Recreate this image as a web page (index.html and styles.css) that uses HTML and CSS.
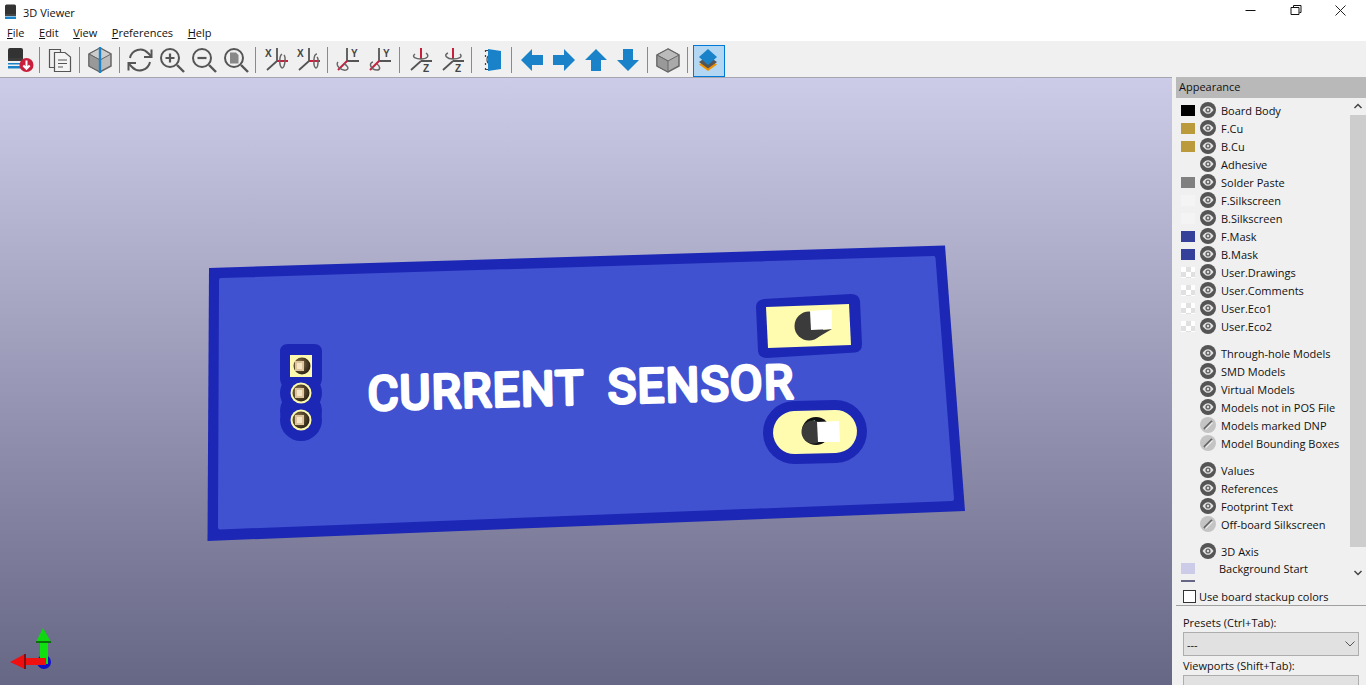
FILE: index.html
```html
<!DOCTYPE html>
<html lang="en">
<head>
<meta charset="utf-8">
<title>3D Viewer</title>
<link rel="stylesheet" href="styles.css">
</head>
<body>
<svg class="defs" width="0" height="0" aria-hidden="true">
  <symbol id="eye" viewBox="0 0 16 16">
    <circle cx="8" cy="8" r="8" fill="#555"/>
    <path d="M2.5 8C4.5 5 6.2 4.2 8 4.2S11.5 5 13.5 8C11.5 11 9.800 11.800 8 11.800S4.500 11 2.500 8Z" fill="#e4e4e4"/>
    <circle cx="8" cy="8" r="2.600" fill="#666"/>
    <circle cx="8" cy="8" r="1.200" fill="#ddd"/>
  </symbol>
  <symbol id="eye-off" viewBox="0 0 16 16">
    <circle cx="8" cy="8" r="8" fill="#c4c4c4"/>
    <path d="M4 12L12 4" stroke="#666" stroke-width="2"/>
    <path d="M5.500 12.500L12.500 5.500" stroke="#eee" stroke-width="1.200"/>
  </symbol>
  <symbol id="page-glass" viewBox="0 0 32 32">
    <circle cx="14" cy="14" r="9" fill="none" stroke="#555" stroke-width="2"/>
    <path d="M21 21L28 28" stroke="#555" stroke-width="2.400"/>
  </symbol>
</svg>

<header class="titlebar">
  <svg class="app-icon" width="16" height="16" viewBox="0 0 16 16">
    <path d="M2 2a1.500 1.500 0 0 1 1.500-1.500h8A1.500 1.500 0 0 1 13 2v8H2Z" fill="#333"/>
    <rect x="2" y="10" width="11" height="2" fill="#444"/>
    <rect x="2" y="12.500" width="11" height="2.500" fill="#1a82c8"/>
  </svg>
  <span class="title-text">3D Viewer</span>
  <div class="window-buttons">
    <svg class="win-btn" width="45" height="24" viewBox="0.500 0 45 24"><path d="M18 10.500H28" stroke="#111"/></svg>
    <svg class="win-btn" width="45" height="24" viewBox="0.500 0 45 24"><path d="M18.500 7.500H26.500V14.500H18.500Z M21 7V5.500H28.500V12.500H27" fill="none" stroke="#111"/></svg>
    <svg class="win-btn" width="45" height="24" viewBox="0.500 0 45 24"><path d="M18 5.500L28 15.500M28 5.500L18 15.500" stroke="#222"/></svg>
  </div>
</header>

<nav class="menubar">
  <span class="menu-item"><u>F</u>ile</span>
  <span class="menu-item"><u>E</u>dit</span>
  <span class="menu-item"><u>V</u>iew</span>
  <span class="menu-item"><u>P</u>references</span>
  <span class="menu-item"><u>H</u>elp</span>
</nav>

<div class="toolbar">
  <button class="tool"><svg width="32" height="32" viewBox="0 0 32 32">
    <path d="M4 6a2 2 0 0 1 2-2h11a2 2 0 0 1 2 2v8H4Z" fill="#333"/><rect x="4" y="14" width="15" height="3" fill="#3b3b3b"/>
    <rect x="4" y="19" width="15" height="1.500" fill="#1a82c8"/><rect x="4" y="22" width="15" height="2.500" fill="#1a82c8"/>
    <circle cx="22.500" cy="21" r="7" fill="#c8203c"/><path d="M22.500 16.500V24M19.300 21.500L22.500 24.800L25.700 21.500" fill="none" stroke="#fff" stroke-width="2"/>
  </svg></button>
  <span class="sep"></span>
  <button class="tool"><svg width="32" height="32" viewBox="0 0 32 32">
    <path d="M16.500 8.500V5.500H5.500V23.500H10.500" fill="none" stroke="#555" stroke-width="1.200"/>
    <path d="M10.500 8.500H21L26.500 13V27.500H10.500Z" fill="#f4f4f4" stroke="#555" stroke-width="1.200"/>
    <path d="M14 16H23M14 19.500H23M14 23H19" stroke="#555" stroke-width="1.200"/>
  </svg></button>
  <span class="sep"></span>
  <button class="tool"><svg width="32" height="32" viewBox="0 0 32 32">
    <path d="M16 4L27 10V22L16 28L5 22V10Z" fill="#bbb" stroke="#666" stroke-width="1.500"/>
    <path d="M5 10L16 16L27 10L16 4Z" fill="#ccc" stroke="#666"/><path d="M5 10L16 16V28L5 22Z" fill="#999" stroke="#666"/>
    <path d="M16 3V29" stroke="#1a82c8" stroke-width="2.400"/>
  </svg></button>
  <span class="sep"></span>
  <button class="tool"><svg width="32" height="32" viewBox="0 0 32 32">
    <path d="M6 14A10.500 10.500 0 0 1 24 9L27 12" fill="none" stroke="#555" stroke-width="2"/><path d="M27.500 5.500V13H20" fill="none" stroke="#555" stroke-width="2"/>
    <path d="M26 18A10.500 10.500 0 0 1 8 23L5 20" fill="none" stroke="#555" stroke-width="2"/><path d="M4.500 26.500V19H12" fill="none" stroke="#555" stroke-width="2"/>
  </svg></button>
  <button class="tool"><svg width="32" height="32" viewBox="0 0 32 32">
    <use href="#page-glass"/><path d="M14 9.500V18.500M9.500 14H18.500" stroke="#555" stroke-width="2.200"/>
  </svg></button>
  <button class="tool"><svg width="32" height="32" viewBox="0 0 32 32">
    <use href="#page-glass"/><path d="M9.500 14H18.500" stroke="#555" stroke-width="2.200"/>
  </svg></button>
  <button class="tool"><svg width="32" height="32" viewBox="0 0 32 32">
    <use href="#page-glass"/><path d="M10 8.500H16L18.500 11V19.500H10Z" fill="#888"/>
  </svg></button>
  <span class="sep"></span>
  <button class="tool"><svg width="32" height="32" viewBox="0 0 32 32">
    <text class="axis-letter" x="5" y="13">X</text>
    <path d="M17 4V17M17 17L7 26" stroke="#555" stroke-width="1.800" fill="none"/><path d="M17 17H28" stroke="#c8203c" stroke-width="2"/>
    <path d="M22 10C19 12 19 22 22 24C25 24 26 13 24 11" fill="none" stroke="#666" stroke-width="1.500"/>
  </svg></button>
  <button class="tool"><svg width="32" height="32" viewBox="0 0 32 32">
    <text class="axis-letter" x="5" y="13">X</text>
    <path d="M17 4V17M17 17L7 26" stroke="#555" stroke-width="1.800" fill="none"/><path d="M17 17H28" stroke="#c8203c" stroke-width="2"/>
    <path d="M25 10C21 10 21 23 24 24C26 24 27 15 25 13" fill="none" stroke="#666" stroke-width="1.500"/>
  </svg></button>
  <span class="sep"></span>
  <button class="tool"><svg width="32" height="32" viewBox="0 0 32 32">
    <text class="axis-letter" x="19" y="13">Y</text>
    <path d="M15 4V17H27" stroke="#555" stroke-width="1.800" fill="none"/><path d="M15 17L6 26" stroke="#c8203c" stroke-width="2"/>
    <path d="M6 18C3 21 9 27 14 26C18 25 15 21 12 20" fill="none" stroke="#666" stroke-width="1.500"/>
  </svg></button>
  <button class="tool"><svg width="32" height="32" viewBox="0 0 32 32">
    <text class="axis-letter" x="19" y="13">Y</text>
    <path d="M15 4V17H27" stroke="#555" stroke-width="1.800" fill="none"/><path d="M15 17L6 26" stroke="#c8203c" stroke-width="2"/>
    <path d="M9 18C4 19 7 26 13 26C17 26 16 22 13 20" fill="none" stroke="#666" stroke-width="1.500"/>
  </svg></button>
  <span class="sep"></span>
  <button class="tool"><svg width="32" height="32" viewBox="0 0 32 32">
    <text class="axis-letter" x="19" y="28">Z</text>
    <path d="M17 4V15" stroke="#c8203c" stroke-width="2"/><path d="M17 17H28M17 17L7 26" stroke="#555" stroke-width="1.800"/>
    <path d="M11 10C7 13 12 15 17 15C23 15 26 12 22 9" fill="none" stroke="#666" stroke-width="1.500"/>
  </svg></button>
  <button class="tool"><svg width="32" height="32" viewBox="0 0 32 32">
    <text class="axis-letter" x="19" y="28">Z</text>
    <path d="M17 4V15" stroke="#c8203c" stroke-width="2"/><path d="M17 17H28M17 17L7 26" stroke="#555" stroke-width="1.800"/>
    <path d="M12 9C7 11 11 15 17 15C23 15 27 13 24 10" fill="none" stroke="#666" stroke-width="1.500"/>
  </svg></button>
  <span class="sep"></span>
  <button class="tool"><svg width="32" height="32" viewBox="0 0 32 32">
    <path d="M13 6.500H9.500V8M9.500 11V13M9.500 19V21M9.500 24V25.500H13" fill="none" stroke="#444" stroke-width="1.200"/>
    <path d="M14 11C10 12 10 19 14 20" fill="none" stroke="#444" stroke-width="1.200"/>
    <path d="M12 5L25 7V25L12 27Z" fill="#1a82c8"/>
  </svg></button>
  <span class="sep"></span>
  <button class="tool"><svg width="32" height="32" viewBox="0 0 32 32"><path d="M5 16L16 5V11H27V21H16V27Z" fill="#1a82c8"/></svg></button>
  <button class="tool"><svg width="32" height="32" viewBox="0 0 32 32"><path d="M27 16L16 5V11H5V21H16V27Z" fill="#1a82c8"/></svg></button>
  <button class="tool"><svg width="32" height="32" viewBox="0 0 32 32"><path d="M16 5L27 16H21V27H11V16H5Z" fill="#1a82c8"/></svg></button>
  <button class="tool"><svg width="32" height="32" viewBox="0 0 32 32"><path d="M16 27L27 16H21V5H11V16H5Z" fill="#1a82c8"/></svg></button>
  <span class="sep"></span>
  <button class="tool"><svg width="32" height="32" viewBox="0 0 32 32">
    <path d="M16 5L27 11V22L16 28L5 22V11Z" fill="#aaa" stroke="#666" stroke-width="1.500"/>
    <path d="M5 11L16 17L27 11L16 5Z" fill="#bbb" stroke="#666"/><path d="M5 11L16 17V28L5 22Z" fill="#999" stroke="#666"/>
  </svg></button>
  <span class="sep"></span>
  <button class="tool tool-active"><svg width="32" height="32" viewBox="0 0 32 32">
    <path d="M16 15L25 20.500L16 27L7 20.500Z" fill="#f29100"/>
    <path d="M16 12L25 18L16 24.500L7 18Z" fill="#555"/>
    <path d="M16 5L25 13L16 21L7 13Z" fill="#1a82c8"/>
  </svg></button>
</div>

<main class="workspace">
  <svg class="viewport" viewBox="0 78 1172 607" preserveAspectRatio="none">
    <defs>
      <linearGradient id="bg" x1="0" y1="0" x2="0" y2="1">
        <stop offset="0" stop-color="#ccccE8"/>
        <stop offset="1" stop-color="#666685"/>
      </linearGradient>
      <radialGradient id="pin" cx="0.350" cy="0.400" r="0.700">
        <stop offset="0" stop-color="#a08458"/>
        <stop offset="0.600" stop-color="#4e4028"/>
        <stop offset="1" stop-color="#241d12"/>
      </radialGradient>
    </defs>
    <rect x="0" y="78" width="1172" height="607" fill="url(#bg)"/>

    <path d="M209 268L945 245.500L965 511L207.500 541Z" fill="#1c27b5"/>
    <path d="M221 280L933.500 258L952 499L220 527.500Z" fill="#4052d0" stroke="#4052d0" stroke-width="4" stroke-linejoin="round"/>

    <text class="board-text" transform="matrix(1 -0.028 0.02 1 368 410)">CURRENT SENSOR</text>

    <g class="connector">
      <path d="M288 344H314Q322 344 322 352V378Q322 383 319 386Q323 393 319 400Q330 420 301 441Q272 420 283 400Q279 393 283 386Q280 383 280 378V352Q280 344 288 344Z" fill="#1c27b5"/>
      <circle cx="301" cy="393" r="21" fill="#1c27b5"/>
      <circle cx="301" cy="420" r="21" fill="#1c27b5"/>
      <rect x="290" y="355" width="22" height="22" fill="#fdfab0"/>
      <circle cx="302" cy="366" r="8.500" fill="url(#pin)"/>
      <rect x="295" y="361" width="9" height="10" fill="#dcc49c"/>
      <rect x="297" y="363" width="5" height="6" fill="#f6e6c8"/>
      <circle cx="301" cy="393" r="10.500" fill="#fdfab0"/>
      <circle cx="301" cy="393" r="8.500" fill="url(#pin)"/>
      <rect x="295" y="388" width="9" height="10" fill="#dcc49c"/>
      <rect x="297" y="390" width="5" height="6" fill="#f6e6c8"/>
      <circle cx="301" cy="420" r="10.500" fill="#fdfab0"/>
      <circle cx="301" cy="420" r="8.500" fill="url(#pin)"/>
      <rect x="295" y="415" width="9" height="10" fill="#dcc49c"/>
      <rect x="297" y="417" width="5" height="6" fill="#f6e6c8"/>
    </g>

    <path d="M764 299L851 294Q859 294 860 301L862 344Q862 352 855 352.500L767 358Q759 358 758 351L756 307Q756 300 764 299Z" fill="#1c27b5"/>
    <path d="M766 307L849 304L851 345L768 348Z" fill="#fffcb0"/>
    <circle cx="809" cy="326" r="14.500" fill="#3b3b3b"/>
    <path d="M810 331L832 329L815 339Z" fill="#3b3b3b"/>
    <path d="M810 311L832 309.500L832 329L811 330Z" fill="#ffffff"/>

    <rect x="763" y="400.500" width="104" height="63" rx="31.500" transform="rotate(-1.600 815 432)" fill="#1c27b5"/>
    <rect x="773" y="410.500" width="84" height="43" rx="21.500" transform="rotate(-1.600 815 432)" fill="#fffcb0"/>
    <circle cx="816" cy="431" r="14" fill="#111"/>
    <path d="M808 423L815 420L815 424L809 425Z" fill="#8fe0c0"/>
    <circle cx="813" cy="432" r="11.500" fill="#3b3b3b"/>
    <path d="M817 422L839 421L840 442L818 442Z" fill="#ffffff"/>

    <circle cx="44" cy="662" r="7" fill="#1010c4"/>
    <rect x="40" y="642" width="8" height="22" fill="#10e010"/>
    <path d="M43 628L51 642H36Z" fill="#10d810"/>
    <rect x="36" y="641" width="15" height="2" fill="#0a700a"/>
    <rect x="25" y="658" width="21" height="7" fill="#f01010"/>
    <path d="M10 662L25 654V669Z" fill="#ee1010"/>
    <rect x="24" y="654" width="2" height="15" fill="#801010"/>
  </svg>

  <aside class="side">
    <div class="panel">
      <div class="panel-title">Appearance</div>
      <div class="layers">
        <div class="layer-list">
          <div class="group">
            <div class="row"><i class="sw sw-black"></i><svg class="eye"><use href="#eye"/></svg><span>Board Body</span></div>
            <div class="row"><i class="sw sw-cu"></i><svg class="eye"><use href="#eye"/></svg><span>F.Cu</span></div>
            <div class="row"><i class="sw sw-cu"></i><svg class="eye"><use href="#eye"/></svg><span>B.Cu</span></div>
            <div class="row"><i class="sw"></i><svg class="eye"><use href="#eye"/></svg><span>Adhesive</span></div>
            <div class="row"><i class="sw sw-paste"></i><svg class="eye"><use href="#eye"/></svg><span>Solder Paste</span></div>
            <div class="row"><i class="sw sw-silk"></i><svg class="eye"><use href="#eye"/></svg><span>F.Silkscreen</span></div>
            <div class="row"><i class="sw sw-silk"></i><svg class="eye"><use href="#eye"/></svg><span>B.Silkscreen</span></div>
            <div class="row"><i class="sw sw-mask"></i><svg class="eye"><use href="#eye"/></svg><span>F.Mask</span></div>
            <div class="row"><i class="sw sw-mask"></i><svg class="eye"><use href="#eye"/></svg><span>B.Mask</span></div>
            <div class="row"><i class="sw sw-check"></i><svg class="eye"><use href="#eye"/></svg><span>User.Drawings</span></div>
            <div class="row"><i class="sw sw-check"></i><svg class="eye"><use href="#eye"/></svg><span>User.Comments</span></div>
            <div class="row"><i class="sw sw-check"></i><svg class="eye"><use href="#eye"/></svg><span>User.Eco1</span></div>
            <div class="row"><i class="sw sw-check"></i><svg class="eye"><use href="#eye"/></svg><span>User.Eco2</span></div>
          </div>
          <div class="group">
            <div class="row"><i class="sw"></i><svg class="eye"><use href="#eye"/></svg><span>Through-hole Models</span></div>
            <div class="row"><i class="sw"></i><svg class="eye"><use href="#eye"/></svg><span>SMD Models</span></div>
            <div class="row"><i class="sw"></i><svg class="eye"><use href="#eye"/></svg><span>Virtual Models</span></div>
            <div class="row"><i class="sw"></i><svg class="eye"><use href="#eye"/></svg><span>Models not in POS File</span></div>
            <div class="row"><i class="sw"></i><svg class="eye"><use href="#eye-off"/></svg><span>Models marked DNP</span></div>
            <div class="row"><i class="sw"></i><svg class="eye"><use href="#eye-off"/></svg><span>Model Bounding Boxes</span></div>
          </div>
          <div class="group">
            <div class="row"><i class="sw"></i><svg class="eye"><use href="#eye"/></svg><span>Values</span></div>
            <div class="row"><i class="sw"></i><svg class="eye"><use href="#eye"/></svg><span>References</span></div>
            <div class="row"><i class="sw"></i><svg class="eye"><use href="#eye"/></svg><span>Footprint Text</span></div>
            <div class="row"><i class="sw"></i><svg class="eye"><use href="#eye-off"/></svg><span>Off-board Silkscreen</span></div>
          </div>
          <div class="group">
            <div class="row"><i class="sw"></i><svg class="eye"><use href="#eye"/></svg><span>3D Axis</span></div>
            <div class="row row-bg"><i class="sw sw-bgstart"></i><span>Background Start</span></div>
            <div class="row row-bg"><i class="sw sw-bgend"></i><span>Background End</span></div>
          </div>
        </div>
        <div class="scrollbar">
          <svg class="sb-btn" width="16" height="17" viewBox="0 0 16 17"><path d="M4.500 10L8 6.500L11.500 10" fill="none" stroke="#444" stroke-width="1.500"/></svg>
          <div class="sb-thumb"></div>
          <svg class="sb-btn sb-btn-end" width="16" height="17" viewBox="0 0 16 17"><path d="M4.500 7L8 10.500L11.500 7" fill="none" stroke="#444" stroke-width="1.500"/></svg>
        </div>
      </div>
      <label class="stackup"><i class="checkbox"></i>Use board stackup colors</label>
      <div class="presets">
        <div class="field-label">Presets (Ctrl+Tab):</div>
        <div class="select">---<svg width="10" height="6" viewBox="0 0 10 6"><path d="M0.500 0.500L5 5L9.500 0.500" fill="none" stroke="#555"/></svg></div>
        <div class="field-label field-label-next">Viewports (Shift+Tab):</div>
        <div class="select"></div>
      </div>
    </div>
  </aside>
</main>
</body>
</html>
```
FILE: styles.css
```css
* { box-sizing: border-box; }
html, body { margin: 0; height: 685px; overflow: hidden; }
body {
  font-family: "Open Sans", "Noto Sans", sans-serif;
  font-size: 11px;
  color: #111;
  background: #f0f0f0;
  display: flex;
  flex-direction: column;
}
.defs { position: absolute; }
.titlebar {
  height: 24px;
  background: #fff;
  display: flex;
  align-items: center;
  padding-left: 3px;
  flex: none;
}
.app-icon { flex: none; }
.title-text { margin-left: 4px; font-size: 11px; }
.window-buttons { margin-left: auto; margin-right: 3px; display: flex; align-self: flex-start; }
.win-btn { display: block; }
.menubar {
  height: 17px;
  background: #fff;
  display: flex;
  gap: 14.6px;
  padding-left: 7px;
  align-items: center;
  font-size: 11px;
  flex: none;
}
.toolbar {
  height: 37px;
  background: #f0f0f0;
  border-bottom: 1px solid #a5a5b0;
  display: flex;
  align-items: center;
  padding: 2px 0 0 4px;
  flex: none;
}
.tool {
  width: 32px;
  height: 32px;
  padding: 0;
  border: 0;
  background: none;
  display: block;
  position: relative;
}
.tool svg { display: block; }
.tool-active::before {
  content: "";
  position: absolute;
  left: 1px;
  top: 1px;
  width: 30px;
  height: 30px;
  background: #b3d7f3;
  border: 1px solid #0078d7;
}
.tool-active svg { position: relative; }
.axis-letter { font: bold 10px "Liberation Sans", sans-serif; fill: #444; }
.sep {
  width: 8px;
  height: 26px;
  display: block;
  background: linear-gradient(#8a8a8a, #8a8a8a) 3px 0 / 1px 100% no-repeat;
}
.workspace { flex: 1; display: flex; min-height: 0; }
.viewport { width: 1172px; height: 607px; flex: none; display: block; }
.board-text {
  font-family: Roboto, sans-serif;
  font-weight: 400;
  font-size: 47px;
  letter-spacing: 1.5px;
  word-spacing: 11px;
  fill: #fff;
  stroke: #fff;
  stroke-width: 3.5;
  stroke-linejoin: round;
}
.side { flex: 1; padding-left: 4px; margin-top: -1px; background: #f0f0f0; min-width: 0; }
.panel { height: 100%; display: flex; flex-direction: column; }
.panel-title {
  height: 21px;
  background: #b9b9b9;
  padding-left: 3px;
  line-height: 20px;
  font-size: 11px;
  flex: none;
}
.layers { height: 484px; display: flex; overflow: hidden; flex: none; }
.layer-list { flex: 1; padding: 3px 0 0 5px; overflow: hidden; min-width: 0; }
.group { margin-bottom: 9px; }
.group:last-child { margin-bottom: 0; }
.row { height: 18px; display: flex; align-items: center; white-space: nowrap; }
.row span { margin-left: 5px; }
.sw { width: 14px; height: 11px; flex: none; margin-right: 5px; }
.sw-black { background: #000; }
.sw-cu { background: #bb9a3c; }
.sw-paste { background: #808080; }
.sw-silk { background: #f4f4f4; }
.sw-mask { background: #35409a; }
.sw-check { background: repeating-conic-gradient(#e0e0e0 0 25%, #fff 0 50%) 0 0 / 10px 10px; }
.sw-bgstart { background: #ccccE8; }
.sw-bgend { background: #666685; }
.eye { width: 16px; height: 16px; flex: none; }
.row-bg { height: 17px; }
.row-bg span { margin-left: 19px; }
.scrollbar { width: 16px; flex: none; display: flex; flex-direction: column; background: #f0f0f0; }
.sb-btn { flex: none; display: block; }
.sb-thumb { height: 432px; background: #cdcdcd; flex: none; }
.sb-btn-end { margin-top: auto; margin-bottom: 1px; }
.stackup { height: 24px; display: flex; align-items: center; padding: 6px 0 0 7px; border-bottom: 1px solid #a0a0a0; flex: none; }
.checkbox { width: 13px; height: 13px; background: #fff; border: 1px solid #333; margin-right: 3px; }
.presets { padding: 9px 7px 0; }
.field-label { height: 16px; line-height: 16px; }
.field-label-next { margin-top: 2px; }
.select {
  height: 24px;
  margin-top: 1px;
  background: #e1e1e1;
  border: 1px solid #adadad;
  padding: 0 3px;
  display: flex;
  align-items: center;
  justify-content: space-between;
}
```
